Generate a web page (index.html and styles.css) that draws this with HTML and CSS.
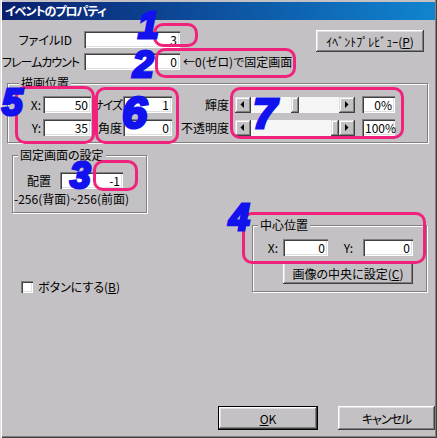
FILE: index.html
```html
<!DOCTYPE html>
<html>
<head>
  <title>イベントのプロパティ</title>
  <link rel="stylesheet" href="styles.css">
</head>
<body>
  <div class="window">
    <div class="titlebar">イベントのプロパティ</div>

    <div class="top">
      <div class="fields">
        <div class="field-row">
          <span class="label">ファイルID</span>
          <span class="edit edit-main">3</span>
        </div>
        <div class="field-row">
          <span class="label tight">フレームカウント</span>
          <span class="edit edit-main">0</span>
          <span class="note">←0(ゼロ)で固定画面</span>
        </div>
      </div>
      <button class="btn btn-preview">ｲﾍﾞﾝﾄﾌﾟﾚﾋﾞｭｰ(<u>P</u>)</button>
    </div>

    <div class="group group-draw">
      <div class="group-title">描画位置</div>
      <div class="draw-rows">
        <div class="draw-row">
          <span class="lbl lbl-xy">X:</span>
          <span class="edit edit-xy">50</span>
          <span class="lbl lbl-size tight">サイズ</span>
          <span class="edit edit-size">1</span>
          <span class="lbl lbl-bar">輝度</span>
          <div class="scrollbar">
            <span class="arrow"><svg width="16" height="16" viewBox="0 0 16 16"><polygon points="9,4 9,11 5.5,7.5" fill="#000"/></svg></span>
            <div class="track"><span class="thumb" style="margin-left: 40px"></span></div>
            <span class="arrow"><svg width="16" height="16" viewBox="0 0 16 16"><polygon points="6,4 6,11 9.5,7.5" fill="#000"/></svg></span>
          </div>
          <span class="edit edit-pct">0%</span>
        </div>
        <div class="draw-row">
          <span class="lbl lbl-xy">Y:</span>
          <span class="edit edit-xy">35</span>
          <span class="lbl lbl-size">角度</span>
          <span class="edit edit-size">0</span>
          <span class="lbl lbl-bar">不透明度</span>
          <div class="scrollbar">
            <span class="arrow"><svg width="16" height="16" viewBox="0 0 16 16"><polygon points="9,4 9,11 5.5,7.5" fill="#000"/></svg></span>
            <div class="track"><span class="thumb" style="margin-left: 80px"></span></div>
            <span class="arrow"><svg width="16" height="16" viewBox="0 0 16 16"><polygon points="6,4 6,11 9.5,7.5" fill="#000"/></svg></span>
          </div>
          <span class="edit edit-pct">100%</span>
        </div>
      </div>
    </div>

    <div class="group group-fixed">
      <div class="group-title">固定画面の設定</div>
      <div class="fixed-row">
        <span class="lbl lbl-place">配置</span>
        <span class="edit edit-place">-1</span>
      </div>
      <div class="hint">-256(背面)~256(前面)</div>
    </div>

    <div class="lower">
      <label class="check">
        <span class="check-box"></span>
        <span>ボタンにする(<u>B</u>)</span>
      </label>

      <div class="group group-center">
        <div class="group-title">中心位置</div>
        <div class="center-row">
          <span class="lbl lbl-cx">X:</span>
          <span class="edit edit-cx">0</span>
          <span class="lbl lbl-cy">Y:</span>
          <span class="edit edit-cy">0</span>
        </div>
        <button class="btn btn-center">画像の中央に設定(<u>C</u>)</button>
      </div>
    </div>

    <div class="actions">
      <button class="btn btn-ok"><u>O</u>K</button>
      <button class="btn btn-cancel tight">キャンセル</button>
    </div>

    <!-- annotations drawn over the dialog -->
    <div class="mark mark-1"></div>
    <div class="mark mark-2"></div>
    <div class="mark mark-3"></div>
    <div class="mark mark-4"></div>
    <div class="mark mark-5"></div>
    <div class="mark mark-6"></div>
    <div class="mark mark-7"></div>
    <span class="num num-1">1</span>
    <span class="num num-2">2</span>
    <span class="num num-3">3</span>
    <span class="num num-4">4</span>
    <span class="num num-5">5</span>
    <span class="num num-6">6</span>
    <span class="num num-7">7</span>
  </div>
</body>
</html>
```

FILE: styles.css
```css
body {
  margin: 0;
  font-family: "Noto Sans CJK JP", "DejaVu Sans", sans-serif;
  font-size: 12px;
  font-feature-settings: "palt";
  color: #000;
  background: #c3c1c3;
}

.window {
  position: relative;
  width: 437px;
  height: 438px;
  box-sizing: border-box;
  padding: 2px 2px 2px 2px;
  display: flex;
  flex-direction: column;
  background: #c3c1c3;
  box-shadow: inset 1px 0 #dfdfdf, inset 2px 0 #fff, inset -1px -1px #404040, inset -2px -2px #808080;
  overflow: hidden;
}

.titlebar {
  height: 18px;
  line-height: 18px;
  padding-left: 3px;
  color: #fff;
  font-weight: bold;
  letter-spacing: -1px;
  background: linear-gradient(to right, #0a1f6e, #1084d0);
}

.tight {
  letter-spacing: -1px;
}

/* controls */

.edit {
  box-sizing: border-box;
  height: 17px;
  line-height: 17px;
  padding: 0 3px;
  text-align: right;
  background: #fff;
  box-shadow: inset 1px 1px #808080, inset 2px 2px #404040, inset -1px -1px #fff, inset -2px -2px #dfdfdf;
}

.btn {
  box-sizing: border-box;
  padding: 0;
  border: none;
  font: inherit;
  color: #000;
  background: #c3c1c3;
  box-shadow: inset -1px -1px #404040, inset 1px 1px #fff, inset -2px -2px #808080, inset 2px 2px #dfdfdf;
}

.lbl {
  box-sizing: border-box;
  line-height: 17px;
  text-align: right;
  white-space: nowrap;
}

.group {
  box-sizing: border-box;
  border: 1px solid #808080;
  box-shadow: inset 1px 1px #fff, 1px 1px #fff;
}

.group-title {
  width: fit-content;
  margin-top: -8px;
  padding: 0 2px;
  line-height: 14px;
  background: #c3c1c3;
}

/* top rows */

.top {
  display: flex;
  margin-top: 11px;
}

.fields {
  display: flex;
  flex-direction: column;
  gap: 5px;
}

.field-row {
  display: flex;
  align-items: center;
}

.label {
  width: 70px;
  text-align: right;
  white-space: nowrap;
}

.edit-main {
  width: 96px;
  margin-left: 12px;
}

.note {
  margin-left: 3px;
  white-space: nowrap;
}

.btn-preview {
  width: 108px;
  height: 22px;
  margin: -1px 11px 0 auto;
}

/* 描画位置 */

.group-draw {
  width: 421px;
  height: 60px;
  margin: 13px 0 0 5px;
}

.group-draw .group-title {
  margin-left: 11px;
}

.draw-rows {
  display: flex;
  flex-direction: column;
  gap: 6px;
  margin-top: 6px;
}

.draw-row {
  display: flex;
  align-items: center;
}

.lbl-xy {
  width: 35px;
  padding-right: 2px;
}

.edit-xy {
  width: 48px;
}

.lbl-size {
  width: 32px;
  padding-right: 1px;
}

.edit-size {
  width: 49px;
}

.lbl-bar {
  width: 63px;
  padding-right: 6px;
}

.scrollbar {
  display: flex;
  width: 120px;
  height: 16px;
}

.arrow,
.thumb {
  flex: none;
  width: 16px;
  height: 16px;
  background: #c3c1c3;
  box-shadow: inset -1px -1px #404040, inset 1px 1px #dfdfdf, inset -2px -2px #808080, inset 2px 2px #fff;
}

.arrow svg {
  display: block;
}

.track {
  flex: 1;
  display: flex;
  background: #f6f6f6;
}

.thumb {
  width: 8px;
}

.edit-pct {
  width: 33px;
  margin-left: 7px;
}

/* 固定画面の設定 */

.group-fixed {
  width: 135px;
  height: 58px;
  margin: 12px 0 0 10px;
}

.group-fixed .group-title {
  margin-left: 5px;
}

.fixed-row {
  display: flex;
  margin-top: 10px;
}

.lbl-place {
  width: 47px;
  padding-left: 14px;
  text-align: left;
}

.edit-place {
  width: 63px;
}

.hint {
  margin-top: 3px;
  padding-left: 1px;
  line-height: 14px;
  white-space: nowrap;
}

/* lower area */

.lower {
  display: flex;
  justify-content: space-between;
  align-items: flex-end;
  margin-top: 12px;
}

.check {
  display: flex;
  align-items: center;
  gap: 5px;
  margin: 0 0 -2px 19px;
  line-height: 14px;
}

.check-box {
  width: 12px;
  height: 12px;
  background: #fff;
  box-shadow: inset 1px 1px #808080, inset 2px 2px #404040, inset -1px -1px #fff, inset -2px -2px #dfdfdf;
}

.group-center {
  width: 175px;
  height: 67px;
  margin-right: 8px;
}

.group-center .group-title {
  margin-left: 5px;
}

.center-row {
  display: flex;
  margin-top: 7px;
}

.lbl-cx {
  width: 30px;
  padding-right: 5px;
}

.edit-cx {
  width: 45px;
}

.lbl-cy {
  width: 35px;
  padding-right: 10px;
}

.edit-cy {
  width: 50px;
}

.btn-center {
  display: block;
  width: 130px;
  height: 22px;
  margin: 6px 0 0 30px;
}

/* bottom buttons */

.actions {
  display: flex;
  justify-content: flex-end;
  gap: 20px;
  margin-top: auto;
  margin-bottom: 6px;
}

.btn-ok {
  width: 100px;
  height: 24px;
  border: 1px solid #000;
}

.btn-cancel {
  width: 97px;
  height: 24px;
}

/* annotation overlay */

.mark {
  position: absolute;
  box-sizing: border-box;
  border: 3px solid #f0227c;
  border-radius: 10px;
}

.mark-1 { left: 153px; top: 23px; width: 45px; height: 24px; }
.mark-2 { left: 155px; top: 48px; width: 141px; height: 30px; }
.mark-3 { left: 93px; top: 160px; width: 45px; height: 31px; }
.mark-4 { left: 242px; top: 212px; width: 184px; height: 52px; }
.mark-5 { left: 15px; top: 86px; width: 80px; height: 58px; }
.mark-6 { left: 95px; top: 87px; width: 84px; height: 57px; }
.mark-7 { left: 230px; top: 87px; width: 174px; height: 52px; }

.num {
  position: absolute;
  font-family: "Liberation Sans", sans-serif;
  font-style: italic;
  font-weight: bold;
  font-size: 37px;
  line-height: 0.8;
  color: #1212ee;
  -webkit-text-stroke: 3px #1212ee;
}

.num-1 { left: 138px; top: 11px; }
.num-2 { left: 133px; top: 50px; }
.num-3 { left: 70px; top: 161px; }
.num-4 { left: 229px; top: 203px; }
.num-5 { left: 2px; top: 88px; }
.num-6 { left: 122px; top: 95px; font-size: 45px; }
.num-7 { left: 253px; top: 96px; font-size: 43px; }
```
